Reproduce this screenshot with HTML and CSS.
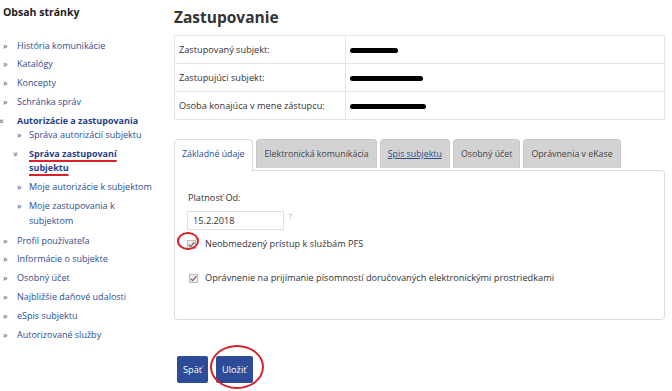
FILE: index.html
```html
<!DOCTYPE html>
<html lang="sk">
<head>
<meta charset="utf-8">
<title>Zastupovanie</title>
<link rel="stylesheet" href="styles.css">
</head>
<body>
<div class="page">
  <nav class="sidebar">
    <h2 class="side-title">Obsah stránky</h2>
    <ul class="menu">
      <li><a href="#">História komunikácie</a></li>
      <li><a href="#">Katalógy</a></li>
      <li><a href="#">Koncepty</a></li>
      <li><a href="#">Schránka správ</a></li>
      <li class="open has-sub">
        <div class="row"><a href="#" class="strong">Autorizácie a zastupovania</a></div>
        <ul class="submenu">
          <li><a href="#">Správa autorizácií subjektu</a></li>
          <li class="open"><a href="#" class="strong marked">Správa zastupovaní subjektu</a></li>
          <li><a href="#">Moje autorizácie k subjektom</a></li>
          <li><a href="#">Moje zastupovania k subjektom</a></li>
        </ul>
      </li>
      <li><a href="#">Profil používateľa</a></li>
      <li><a href="#">Informácie o subjekte</a></li>
      <li><a href="#">Osobný účet</a></li>
      <li><a href="#">Najbližšie daňové udalosti</a></li>
      <li><a href="#">eSpis subjektu</a></li>
      <li><a href="#">Autorizované služby</a></li>
    </ul>
  </nav>

  <main class="main">
    <h1 class="title">Zastupovanie</h1>
    <table class="info">
      <tr><td class="lbl">Zastupovaný subjekt:</td><td><span class="redact r1"></span></td></tr>
      <tr><td class="lbl">Zastupujúci subjekt:</td><td><span class="redact r2"></span></td></tr>
      <tr><td class="lbl">Osoba konajúca v mene zástupcu:</td><td><span class="redact r3"></span></td></tr>
    </table>

    <div class="tabs">
      <div class="tab active">Základné údaje</div>
      <div class="tab">Elektronická komunikácia</div>
      <div class="tab link">Spis subjektu</div>
      <div class="tab">Osobný účet</div>
      <div class="tab">Oprávnenia v eKase</div>
    </div>
    <div class="panel">
      <div class="field-label">Platnosť Od:</div>
      <div class="date-row">
        <div class="date-input">15.2.2018</div>
        <span class="help">?</span>
      </div>
      <div class="check-row first">
        <span class="cb-wrap">
          <span class="cb"><svg width="9" height="9" viewBox="0 0 9 9"><path d="M1.6 4.6 L3.6 6.6 L7.4 2.2" fill="none" stroke="#6a6a6a" stroke-width="1.3"/></svg></span>
          <span class="ring ring-cb"></span>
        </span>
        <span class="cb-text">Neobmedzený prístup k službám PFS</span>
      </div>
      <div class="check-row second">
        <span class="cb-wrap">
          <span class="cb"><svg width="9" height="9" viewBox="0 0 9 9"><path d="M1.6 4.6 L3.6 6.6 L7.4 2.2" fill="none" stroke="#6a6a6a" stroke-width="1.3"/></svg></span>
        </span>
        <span class="cb-text">Oprávnenie na prijímanie písomností doručovaných elektronickými prostriedkami</span>
      </div>
    </div>

    <div class="actions">
      <button class="btn">Späť</button>
      <span class="btn-wrap">
        <button class="btn">Uložiť</button>
        <span class="ring ring-btn"></span>
      </span>
    </div>
  </main>
</div>
</body>
</html>
```
FILE: styles.css
```css
* { box-sizing: border-box; }
html, body { margin: 0; padding: 0; background: #fff; }
body {
  font-family: "Open Sans", "DejaVu Sans", sans-serif;
  color: #333;
  width: 672px;
  height: 391px;
  overflow: hidden;
}
a { text-decoration: none; }

.page { display: flex; align-items: flex-start; }

/* Sidebar */
.sidebar { width: 174px; padding: 0 18px 0 3px; flex: none; }
.side-title {
  margin: 4px 0 0;
  font-size: 10.5px;
  line-height: 16px;
  font-weight: 700;
  color: #222;
}
.menu, .submenu { list-style: none; margin: 0; padding: 0; }
.menu { margin-top: 18.5px; }
.menu li {
  font-size: 9px;
  line-height: 14.5px;
  margin-top: 4.3px;
  display: flex;
}
.menu li.has-sub { display: block; }
.menu li.has-sub .row { display: flex; }
.menu li::before, .menu li.has-sub .row::before {
  content: "»";
  flex: none;
  width: 14px;
  color: #555;
  font-size: 9px;
  line-height: 13px;
}
.menu li.has-sub::before { content: none; }
.menu li.open > .row::before, .submenu li.open::before {
  content: "»";
  display: inline-block;
  transform: rotate(90deg) translate(1px, 4px);
  transform-origin: 3px 7px;
}
.menu a { color: #2d4e8f; }
.menu a.strong { font-weight: 700; color: #1f3f8a; }
.submenu { padding-left: 14px; margin-bottom: 5.5px; }
.submenu li:first-child { margin-top: 0; }
.submenu li::before { width: 12px; }
.marked {
  text-decoration: underline;
  text-decoration-color: #d6222a;
  text-decoration-thickness: 2px;
  text-underline-offset: 3px;
}

/* Main */
.main { width: 491px; flex: none; }
.title {
  margin: 7px 0 0;
  font-size: 15.5px;
  line-height: 20px;
  font-weight: 700;
  color: #333;
}
.info {
  margin-top: 8px;
  width: 491px;
  border-collapse: collapse;
  font-size: 9.2px;
}
.info td {
  border: 1px solid #e3e6ec;
  height: 28px;
  padding: 0 4px;
  vertical-align: middle;
}
.info td.lbl { width: 171px; color: #333; }
.redact {
  display: inline-block;
  height: 5px;
  background: #000;
  border-radius: 3px;
  vertical-align: middle;
}
.r1 { width: 48px; }
.r2 { width: 73px; }
.r3 { width: 76px; }

.tabs {
  display: flex;
  gap: 3px;
  margin-top: 19px;
  align-items: flex-start;
  position: relative;
  z-index: 1;
}
.tab {
  height: 29px;
  line-height: 28px;
  padding: 0 7px;
  font-size: 8.8px;
  color: #444;
  background: #d3d3d3;
  border: 1px solid #c9c9c9;
  border-bottom: none;
  border-radius: 4px 4px 0 0;
  white-space: nowrap;
}
.tab.active {
  background: #fff;
  border-color: #dcdcdc;
  height: 33px;
  color: #2d4e8f;
  margin-bottom: -1px;
  padding-right: 8px;
}
.tab.link { color: #2d4e8f; text-decoration: underline; }

.panel {
  margin-top: -1px;
  border: 1px solid #dcdcdc;
  border-radius: 0 4px 4px 4px;
  height: 150px;
  padding: 20px 0 0 13px;
  font-size: 9.2px;
}
.panel .field-label { line-height: 14px; color: #333; }
.date-row { display: flex; align-items: flex-start; margin-top: 6px; margin-left: -1px; }
.date-input {
  width: 97px;
  height: 19px;
  border: 1px solid #e0e0e0;
  padding-left: 5px;
  line-height: 18px;
  color: #333;
  margin-top: 0;
}
.help { font-size: 6.5px; color: #999; margin-left: 5px; margin-top: 1px; }

.check-row { display: flex; align-items: center; line-height: 14px; }
.check-row.first { margin-top: 7px; margin-left: -1px; }
.check-row.second { margin-top: 20px; margin-left: 1px; }
.check-row.second .cb-text { margin-left: -2px; }
.cb-wrap { position: relative; width: 18px; flex: none; height: 14px; display: flex; align-items: center; }
.cb {
  width: 9px;
  height: 9px;
  border: 1px solid #bdbdbd;
  background: #ececec;
  display: flex;
  align-items: center;
  justify-content: center;
}
.cb svg { display: block; margin: -1px; }
.cb-text { color: #333; }

.ring {
  position: absolute;
  border: 2.5px solid #d6222a;
  border-radius: 50%;
  pointer-events: none;
}
.ring-cb { left: -10px; top: -5px; width: 22px; height: 18px; }

.actions { display: flex; gap: 8px; margin-top: 36px; margin-left: 3px; }
.btn-wrap { position: relative; }
.btn {
  height: 27px;
  padding: 0 6px;
  border: none;
  border-radius: 2px;
  background: #2c4c98;
  color: #fff;
  font-family: "Open Sans", "DejaVu Sans", sans-serif;
  font-size: 9.2px;
}
.ring-btn { left: -6px; top: -11px; width: 54px; height: 44px; }
```
